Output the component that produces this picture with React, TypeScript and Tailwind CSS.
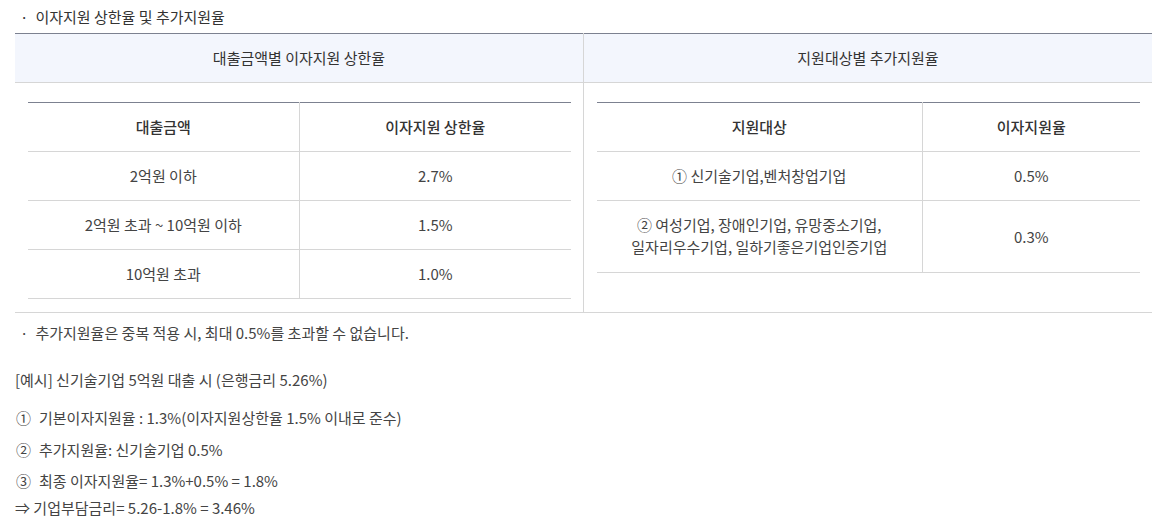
import React from "react";

const capRows = [
  { amount: "2억원 이하", rate: "2.7%" },
  { amount: "2억원 초과 ~ 10억원 이하", rate: "1.5%" },
  { amount: "10억원 초과", rate: "1.0%" },
];

const extraRows = [
  { target: ["① 신기술기업,벤처창업기업"], rate: "0.5%" },
  { target: ["② 여성기업, 장애인기업, 유망중소기업,", "일자리우수기업, 일하기좋은기업인증기업"], rate: "0.3%" },
];

const th = "h-[49px] border-b border-[#d6d6d6] text-center font-medium text-[#333] align-middle";
const td = "py-[13px] border-b border-[#d6d6d6] text-center text-[#444] align-middle leading-[22px]";

export default function App() {
  return (
    <div
      className="w-[1152px] h-[516px] overflow-hidden bg-white pl-[15px] pt-[6px] text-[15px] leading-[22px] text-[#444]"
      style={{ fontFamily: '"Noto Sans CJK KR", "Noto Sans", sans-serif' }}
    >
      {/* Title */}
      <p className="pl-[5px] text-[#333]">
        <span className="mr-[7px]">·</span>이자지원 상한율 및 추가지원율
      </p>

      {/* Outer table */}
      <table className="mt-[5px] w-[1137px] table-fixed border-collapse">
        <thead>
          <tr className="bg-[#f3f6fd]">
            <th className="h-[49px] w-1/2 border-t border-b border-t-[#7c8190] border-b-[#d6d6d6] border-r border-r-[#d6d6d6] text-center font-normal text-[#333]">
              대출금액별 이자지원 상한율
            </th>
            <th className="h-[49px] w-1/2 border-t border-b border-t-[#7c8190] border-b-[#d6d6d6] text-center font-normal text-[#333]">
              지원대상별 추가지원율
            </th>
          </tr>
        </thead>
        <tbody>
          <tr className="border-b border-[#d6d6d6]">
            <td className="border-r border-[#d6d6d6] pl-[13px] pr-[12px] pt-[19px] pb-[13px] align-top">
              <table className="w-full table-fixed border-collapse border-t border-[#7c8190]">
                <thead>
                  <tr>
                    <th className={`${th} w-[271px] border-r`}>대출금액</th>
                    <th className={th}>이자지원 상한율</th>
                  </tr>
                </thead>
                <tbody>
                  {capRows.map((r) => (
                    <tr key={r.amount}>
                      <td className={`${td} border-r`}>{r.amount}</td>
                      <td className={td}>{r.rate}</td>
                    </tr>
                  ))}
                </tbody>
              </table>
            </td>
            <td className="pl-[13px] pr-[12px] pt-[19px] pb-[13px] align-top">
              <table className="w-full table-fixed border-collapse border-t border-[#7c8190]">
                <thead>
                  <tr>
                    <th className={`${th} w-[325px] border-r`}>지원대상</th>
                    <th className={th}>이자지원율</th>
                  </tr>
                </thead>
                <tbody>
                  {extraRows.map((r) => (
                    <tr key={r.rate}>
                      <td className={`${td} border-r ${r.target.length > 1 ? "pb-[14px]" : ""}`}>
                        {r.target.map((line) => (
                          <div key={line}>{line}</div>
                        ))}
                      </td>
                      <td className={td}>{r.rate}</td>
                    </tr>
                  ))}
                </tbody>
              </table>
            </td>
          </tr>
        </tbody>
      </table>

      {/* Notes */}
      <p className="mt-[9px] pl-[5px]">
        <span className="mr-[7px]">·</span>추가지원율은 중복 적용 시, 최대 0.5%를 초과할 수 없습니다.
      </p>
      <p className="mt-[25px]">[예시] 신기술기업 5억원 대출 시 (은행금리 5.26%)</p>
      <p className="mt-[16px] pl-[1px]">
        <span className="mr-[8px]">①</span>기본이자지원율 : 1.3%(이자지원상한율 1.5% 이내로 준수)
      </p>
      <p className="mt-[10px] pl-[1px]">
        <span className="mr-[8px]">②</span>추가지원율: 신기술기업 0.5%
      </p>
      <p className="mt-[9px] pl-[1px]">
        <span className="mr-[8px]">③</span>최종 이자지원율= 1.3%+0.5% = 1.8%
      </p>
      <p className="mt-[5px]">⇒ 기업부담금리= 5.26-1.8% = 3.46%</p>
    </div>
  );
}
